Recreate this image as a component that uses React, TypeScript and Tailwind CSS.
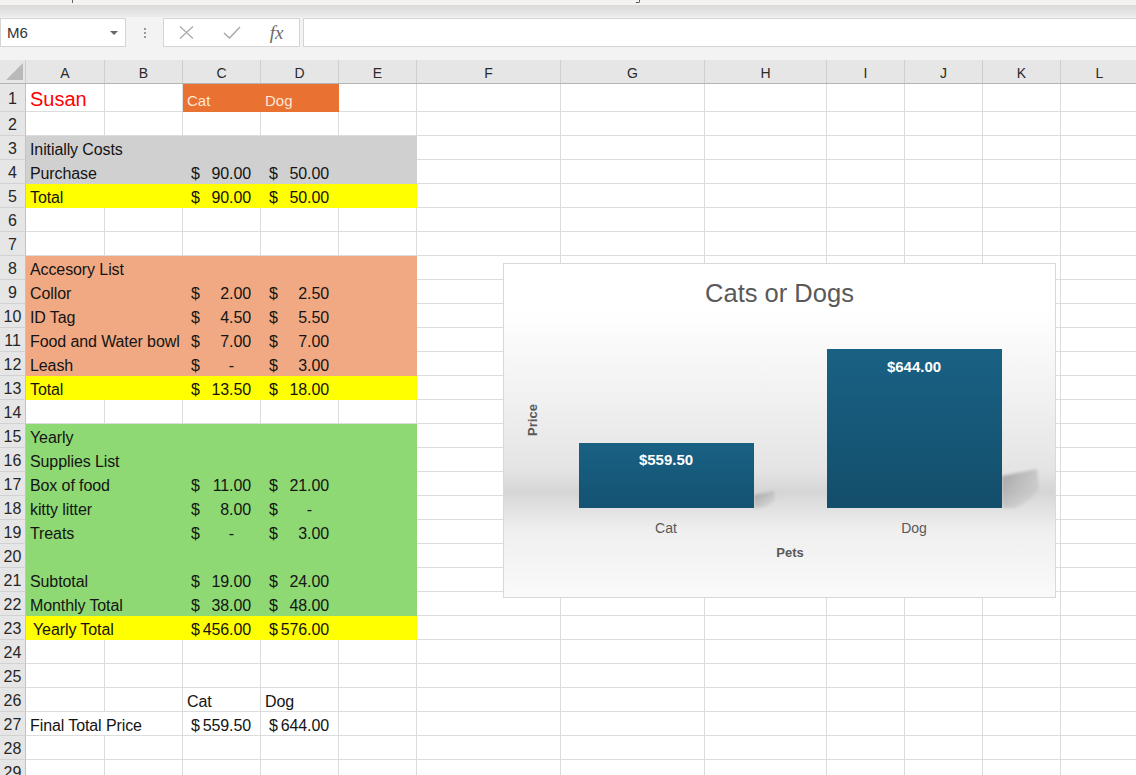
import React from "react";

const COLS = [79, 78, 78, 78, 78, 144, 144, 122, 78, 78, 78, 78];
const LETTERS = ["A", "B", "C", "D", "E", "F", "G", "H", "I", "J", "K", "L"];

const FILL: Record<string, string> = {
  gray: "bg-[#d0d0d0] border-[#d0d0d0]",
  yellow: "bg-[#ffff00] border-[#ffff00]",
  salmon: "bg-[#f1a983] border-[#f1a983]",
  green: "bg-[#8ed973] border-[#8ed973]",
  orange: "bg-[#e97132] border-[#e97132]",
};

type CellSpec = {
  k: "t" | "a" | "d" | "susan" | "hdr";
  t?: string;
  span?: number;
  fill?: string;
  pad?: number;
};
type RowSpec = { h: number; fill?: string; cells: Record<number, CellSpec> };

const txt = (t: string, pad?: number): CellSpec => ({ k: "t", t, span: 2, pad });
const one = (t: string): CellSpec => ({ k: "t", t });
const acct = (t: string): CellSpec => ({ k: "a", t });
const dash: CellSpec = { k: "d" };

const ROWS: RowSpec[] = [
  {
    h: 28,
    cells: {
      0: { k: "susan", t: "Susan" },
      2: { k: "hdr", t: "Cat", fill: "orange" },
      3: { k: "hdr", t: "Dog", fill: "orange" },
    },
  },
  { h: 24, cells: {} },
  { h: 24, fill: "gray", cells: { 0: txt("Initially Costs") } },
  { h: 24, fill: "gray", cells: { 0: txt("Purchase"), 2: acct("90.00"), 3: acct("50.00") } },
  { h: 24, fill: "yellow", cells: { 0: txt("Total"), 2: acct("90.00"), 3: acct("50.00") } },
  { h: 24, cells: {} },
  { h: 24, cells: {} },
  { h: 24, fill: "salmon", cells: { 0: txt("Accesory List") } },
  { h: 24, fill: "salmon", cells: { 0: txt("Collor"), 2: acct("2.00"), 3: acct("2.50") } },
  { h: 24, fill: "salmon", cells: { 0: txt("ID Tag"), 2: acct("4.50"), 3: acct("5.50") } },
  { h: 24, fill: "salmon", cells: { 0: txt("Food and Water bowl"), 2: acct("7.00"), 3: acct("7.00") } },
  { h: 24, fill: "salmon", cells: { 0: txt("Leash"), 2: dash, 3: acct("3.00") } },
  { h: 24, fill: "yellow", cells: { 0: txt("Total"), 2: acct("13.50"), 3: acct("18.00") } },
  { h: 24, cells: {} },
  { h: 24, fill: "green", cells: { 0: txt("Yearly") } },
  { h: 24, fill: "green", cells: { 0: txt("Supplies List") } },
  { h: 24, fill: "green", cells: { 0: txt("Box of food"), 2: acct("11.00"), 3: acct("21.00") } },
  { h: 24, fill: "green", cells: { 0: txt("kitty litter"), 2: acct("8.00"), 3: dash } },
  { h: 24, fill: "green", cells: { 0: txt("Treats"), 2: dash, 3: acct("3.00") } },
  { h: 24, fill: "green", cells: {} },
  { h: 24, fill: "green", cells: { 0: txt("Subtotal"), 2: acct("19.00"), 3: acct("24.00") } },
  { h: 24, fill: "green", cells: { 0: txt("Monthly Total"), 2: acct("38.00"), 3: acct("48.00") } },
  { h: 24, fill: "yellow", cells: { 0: txt("Yearly Total", 7), 2: acct("456.00"), 3: acct("576.00") } },
  { h: 24, cells: {} },
  { h: 24, cells: {} },
  { h: 24, cells: { 2: one("Cat"), 3: one("Dog") } },
  { h: 24, cells: { 0: txt("Final Total Price"), 2: acct("559.50"), 3: acct("644.00") } },
  { h: 24, cells: {} },
  { h: 24, cells: {} },
];

function CellContent({ c }: { c: CellSpec }) {
  if (c.k === "susan")
    return (
      <span className="pl-[4px] pb-[2px] text-[20px] leading-none text-[#ff0000] whitespace-nowrap">
        {c.t}
      </span>
    );
  if (c.k === "hdr")
    return (
      <span className="pl-[4px] pb-[3px] text-[15px] leading-none text-[#fde6d8] whitespace-nowrap">
        {c.t}
      </span>
    );
  if (c.k === "a")
    return (
      <div className="flex-1 flex justify-between pl-[8px] pr-[9px] pb-[1px] text-[16px] leading-none tracking-[-0.1px] text-[#141414] whitespace-nowrap">
        <span>$</span>
        <span>{c.t}</span>
      </div>
    );
  if (c.k === "d")
    return (
      <div className="flex-1 flex justify-between pl-[8px] pr-[26px] pb-[1px] text-[16px] leading-none text-[#141414] whitespace-nowrap">
        <span>$</span>
        <span>-</span>
      </div>
    );
  return (
    <span
      className={`pb-[1px] text-[16px] leading-none tracking-[-0.1px] text-[#141414] whitespace-nowrap ${
        c.pad ? "pl-[7px]" : "pl-[4px]"
      }`}
    >
      {c.t}
    </span>
  );
}

function Row({ r, n }: { r: RowSpec; n: number }) {
  const out: React.ReactNode[] = [];
  let i = 0;
  while (i < COLS.length) {
    const c = r.cells[i];
    const span = c?.span ?? 1;
    let w = 0;
    for (let j = i; j < i + span; j++) w += COLS[j];
    const fill = c?.fill ?? (i < 5 ? r.fill : undefined);
    out.push(
      <div
        key={i}
        style={{ width: w }}
        className={`shrink-0 flex items-end border-r border-b ${
          fill ? FILL[fill] : "border-[#dcdcdc]"
        }`}
      >
        {c ? <CellContent c={c} /> : null}
      </div>
    );
    i += span;
  }
  return (
    <div className="flex shrink-0" style={{ height: r.h }}>
      <div className="w-[26px] shrink-0 bg-[#e6e6e6] border-r border-b border-r-[#c2c2c2] border-b-[#d2d2d2] flex items-center justify-center pt-[3px] text-[16px] leading-none text-[#262626]">
        {n}
      </div>
      {out}
    </div>
  );
}

function Sheet() {
  return (
    <div className="flex flex-col">
      <div className="flex shrink-0 h-[24px] bg-[#e6e6e6] border-b border-[#b4b4b4]">
        <div className="w-[26px] shrink-0 border-r border-[#cfcfcf] relative">
          <svg className="absolute left-[6px] top-[3px]" width="17" height="17" viewBox="0 0 17 17">
            <path d="M17 0V17H0Z" fill="#b9b9b9" />
          </svg>
        </div>
        {COLS.map((w, i) => (
          <div
            key={i}
            style={{ width: w }}
            className="shrink-0 border-r border-[#cfcfcf] flex items-center justify-center pt-[2px] text-[14px] leading-none text-[#2a2a2a]"
          >
            {LETTERS[i]}
          </div>
        ))}
      </div>
      {ROWS.map((r, idx) => (
        <Row key={idx} r={r} n={idx + 1} />
      ))}
    </div>
  );
}

function Chart() {
  return (
    <div className="absolute left-[503px] top-[263px] w-[553px] h-[335px] border border-[#d9d9d9] bg-[linear-gradient(to_bottom,#ffffff_0%,#ffffff_14%,#f1f1f1_40%,#e4e4e4_62%,#d5d5d5_68.5%,#dcdcdc_71%,#efefef_80%,#fafafa_100%)]">
      <div className="absolute left-1/2 -translate-x-1/2 top-[17px] text-[25.5px] leading-none text-[#595959] whitespace-nowrap">
        Cats or Dogs
      </div>
      <svg className="absolute left-0 top-0" width="553" height="335" viewBox="0 0 553 335">
        <defs>
          <linearGradient id="sh" x1="0" y1="0" x2="1" y2="1">
            <stop offset="0" stopColor="#8a8a8a" stopOpacity="0.75" />
            <stop offset="1" stopColor="#c4c4c4" stopOpacity="0.2" />
          </linearGradient>
          <filter id="bl" x="-20%" y="-20%" width="140%" height="140%">
            <feGaussianBlur stdDeviation="1.6" />
          </filter>
        </defs>
        <path d="M498 212 L533 205 L535 224 Q528 236 512 244 L498 244 Z" fill="url(#sh)" filter="url(#bl)" />
        <path d="M250 231 L270 227 L271 236 Q266 241 258 244 L250 244 Z" fill="url(#sh)" filter="url(#bl)" />
      </svg>
      <div className="absolute left-[75px] top-[179px] w-[175px] h-[65px] bg-[linear-gradient(to_bottom,#196184,#145271)]" />
      <div className="absolute left-[323px] top-[85px] w-[175px] h-[159px] bg-[linear-gradient(to_bottom,#196184,#134e6b)]" />
      <div className="absolute left-[162px] -translate-x-1/2 top-[188px] text-[15px] font-bold leading-none text-white whitespace-nowrap">
        $559.50
      </div>
      <div className="absolute left-[410px] -translate-x-1/2 top-[95px] text-[15px] font-bold leading-none text-white whitespace-nowrap">
        $644.00
      </div>
      <div className="absolute left-[162px] -translate-x-1/2 top-[257px] text-[14px] leading-none text-[#595959]">
        Cat
      </div>
      <div className="absolute left-[410px] -translate-x-1/2 top-[257px] text-[14px] leading-none text-[#595959]">
        Dog
      </div>
      <div className="absolute left-[286px] -translate-x-1/2 top-[282px] text-[13px] font-bold leading-none text-[#595959]">
        Pets
      </div>
      <div className="absolute left-[28px] top-[156px] -translate-x-1/2 -translate-y-1/2 -rotate-90 text-[13px] font-bold leading-none text-[#595959]">
        Price
      </div>
    </div>
  );
}

export default function App() {
  return (
    <div className="relative w-[1136px] h-[775px] overflow-hidden bg-white font-['Liberation_Sans',Arial,sans-serif] text-black">
      <div className="relative h-[5px] bg-[#f3f2f1]">
        <span className="absolute left-[72px] top-0 w-px h-[3px] bg-[#666666]" />
        <span className="absolute left-[636px] top-0 w-[4px] h-[3px] border-b border-r border-[#555555] rounded-br-[2px]" />
      </div>
      <div className="h-[12px] bg-gradient-to-b from-[#d9d9d9] to-[#ebebeb]" />
      <div className="h-[43px] bg-[#f3f3f3] pt-px flex items-start">
        <div className="w-[126px] h-[29px] shrink-0 bg-white border border-[#d4d4d4] flex items-center justify-between pl-[6px] pr-[7px]">
          <span className="text-[15px] leading-none text-[#333333]">M6</span>
          <svg width="8" height="4" viewBox="0 0 8 4">
            <path d="M0 0H8L4 4Z" fill="#666666" />
          </svg>
        </div>
        <div className="w-[37px] h-[29px] shrink-0 flex flex-col items-center justify-center gap-[2px]">
          <span className="w-[2px] h-[2px] bg-[#9a9a9a]" />
          <span className="w-[2px] h-[2px] bg-[#9a9a9a]" />
          <span className="w-[2px] h-[2px] bg-[#9a9a9a]" />
        </div>
        <div className="w-[137px] h-[29px] shrink-0 bg-white border border-[#d4d4d4] flex items-center">
          <div className="w-[45px] flex justify-center">
            <svg width="15" height="13" viewBox="0 0 15 13">
              <path d="M1 0.5L14 12.5M14 0.5L1 12.5" stroke="#a9a9a9" strokeWidth="1.2" fill="none" />
            </svg>
          </div>
          <div className="w-[45px] flex justify-center">
            <svg width="18" height="13" viewBox="0 0 18 13">
              <path d="M1 7L6.5 12L17 1" stroke="#a9a9a9" strokeWidth="1.5" fill="none" />
            </svg>
          </div>
          <div className="w-[45px] flex justify-center">
            <span className="font-['Liberation_Serif',serif] italic text-[19px] leading-none text-[#6b6b6b]">fx</span>
          </div>
        </div>
        <div className="ml-[3px] flex-1 h-[29px] bg-white border border-[#d4d4d4] -mr-px" />
      </div>
      <Sheet />
      <Chart />
    </div>
  );
}
